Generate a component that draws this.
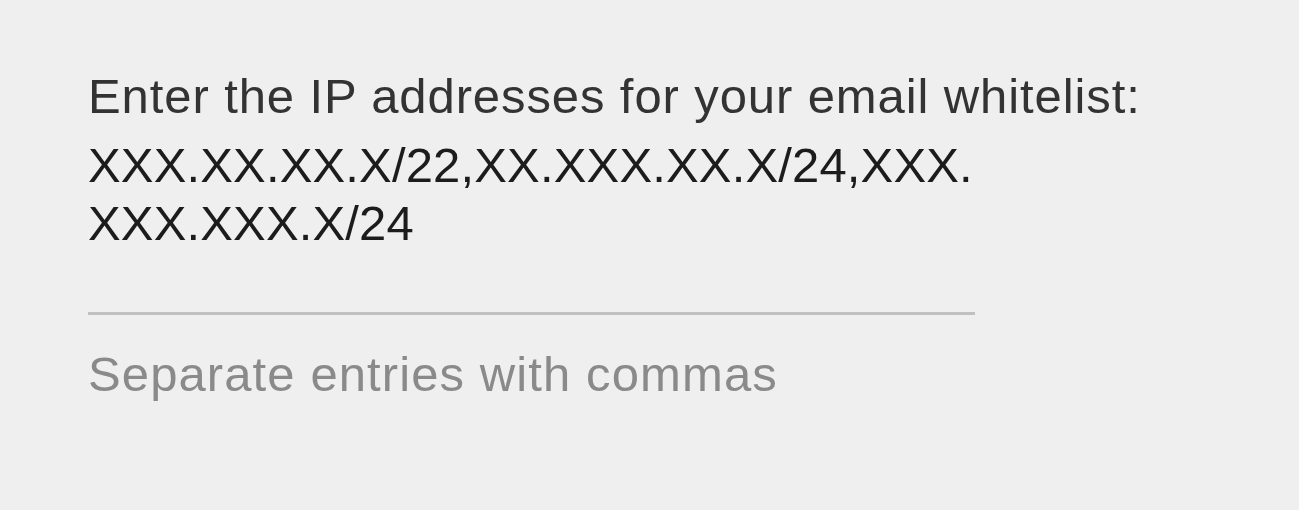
export default function App() {
  return (
    <div
      className="min-h-[510px] w-full bg-[#efefef] pl-[88px] pt-[67px]"
      style={{ fontFamily: '"Liberation Sans", Arial, sans-serif' }}
    >
      <div className="w-[887px]">
        <label className="block text-[49px] leading-[58px] tracking-[0.9px] text-[#333333] whitespace-nowrap">
          Enter the IP addresses for your email whitelist:
        </label>
        <div className="mt-[11px] text-[49px] leading-[58px] tracking-[0.15px] text-[#1c1c1c]">
          <div>XXX.XX.XX.X/22,XX.XXX.XX.X/24,XXX.</div>
          <div>XXX.XXX.X/24</div>
        </div>
        <div className="mt-[60px] h-[3px] bg-[#c0c0c0]" />
        <p className="mt-[30px] text-[49px] leading-[58px] tracking-[1.1px] text-[#8a8a8a]">
          Separate entries with commas
        </p>
      </div>
    </div>
  );
}
